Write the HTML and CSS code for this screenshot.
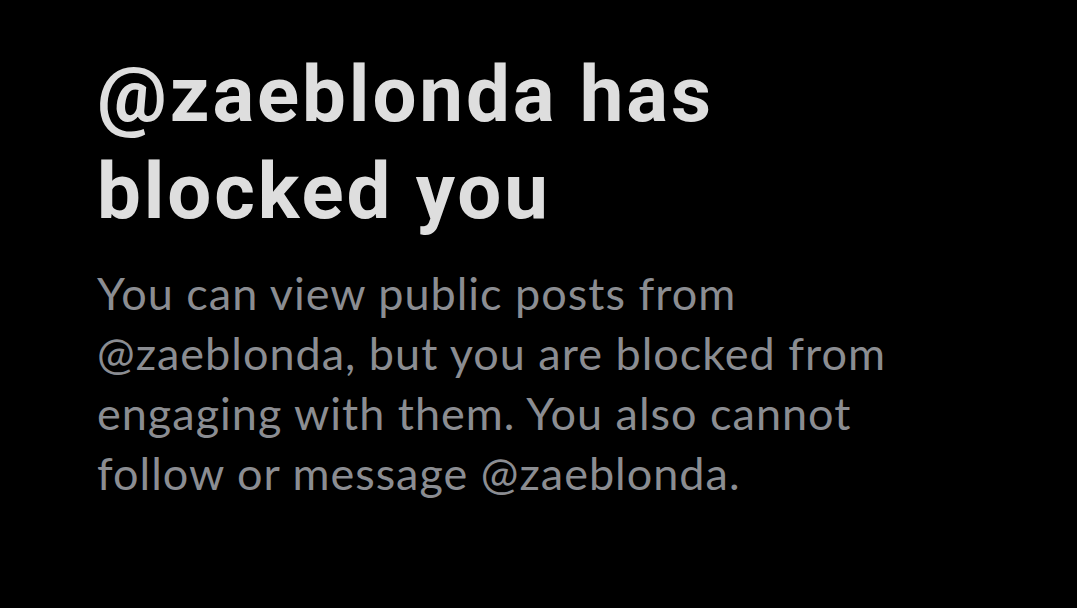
FILE: index.html
```html
<!DOCTYPE html>
<html lang="en">
<head>
<meta charset="utf-8">
<link rel="stylesheet" href="styles.css">
</head>
<body>
<main class="notice">
  <h1 class="notice-title">@zaeblonda has blocked you</h1>
  <p class="notice-text">You can view public posts from @zaeblonda, but you are blocked from engaging with them. You also cannot follow or message @zaeblonda.</p>
</main>
</body>
</html>
```
FILE: styles.css
```css
html, body {
  margin: 0;
  padding: 0;
  background: #000;
  height: 100%;
}
.notice {
  padding: 46px 0 0 97px;
  width: 820px;
  display: flex;
  flex-direction: column;
}
.notice-title {
  margin: 0;
  font-family: Roboto, "Liberation Sans", sans-serif;
  font-weight: 700;
  font-size: 78px;
  line-height: 97px;
  letter-spacing: 2.9px;
  color: #dedede;
  width: 680px;
}
.notice-text {
  margin: 23px 0 0 0;
  font-family: Lato, "Noto Sans", sans-serif;
  font-weight: 400;
  font-size: 45px;
  line-height: 60px;
  letter-spacing: 1px;
  color: #8b8d92;
  width: 820px;
}
```
